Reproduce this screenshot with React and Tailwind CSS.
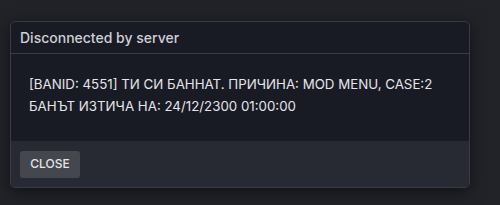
import React from "react"

export default function App() {
  return (
    <div
      className="h-[205px] w-[500px] overflow-hidden bg-[#222329] pl-[10px] pt-[21px]"
      style={{ fontFamily: "Inter, 'Noto Sans', sans-serif" }}
    >
      <div className="w-[460px] overflow-hidden rounded-[5px] border border-[#3a3c45] bg-[#181a24] shadow-[0_4px_16px_rgba(0,0,0,0.5)]">
        <div className="flex h-[32px] items-center border-b border-[#3a3c45] px-[9px] text-[14px] font-medium text-[#cfd0d4]">
          Disconnected by server
        </div>
        <div className="h-[87px] px-[18px] pt-[19px] text-[13.3px] leading-[22px] text-[#e6e6e8]">
          <div>[BANID: 4551] ТИ СИ БАННАТ. ПРИЧИНА: MOD MENU, CASE:2</div>
          <div>БАНЪТ ИЗТИЧА НА: 24/12/2300 01:00:00</div>
        </div>
        <div className="flex h-[46px] items-center bg-[#272a33] px-[9px]">
          <button className="flex h-[27px] w-[60px] items-center justify-center rounded-[3px] bg-[#45474e] text-[12px] font-medium text-[#e4e4e6]">
            CLOSE
          </button>
        </div>
      </div>
    </div>
  )
}
